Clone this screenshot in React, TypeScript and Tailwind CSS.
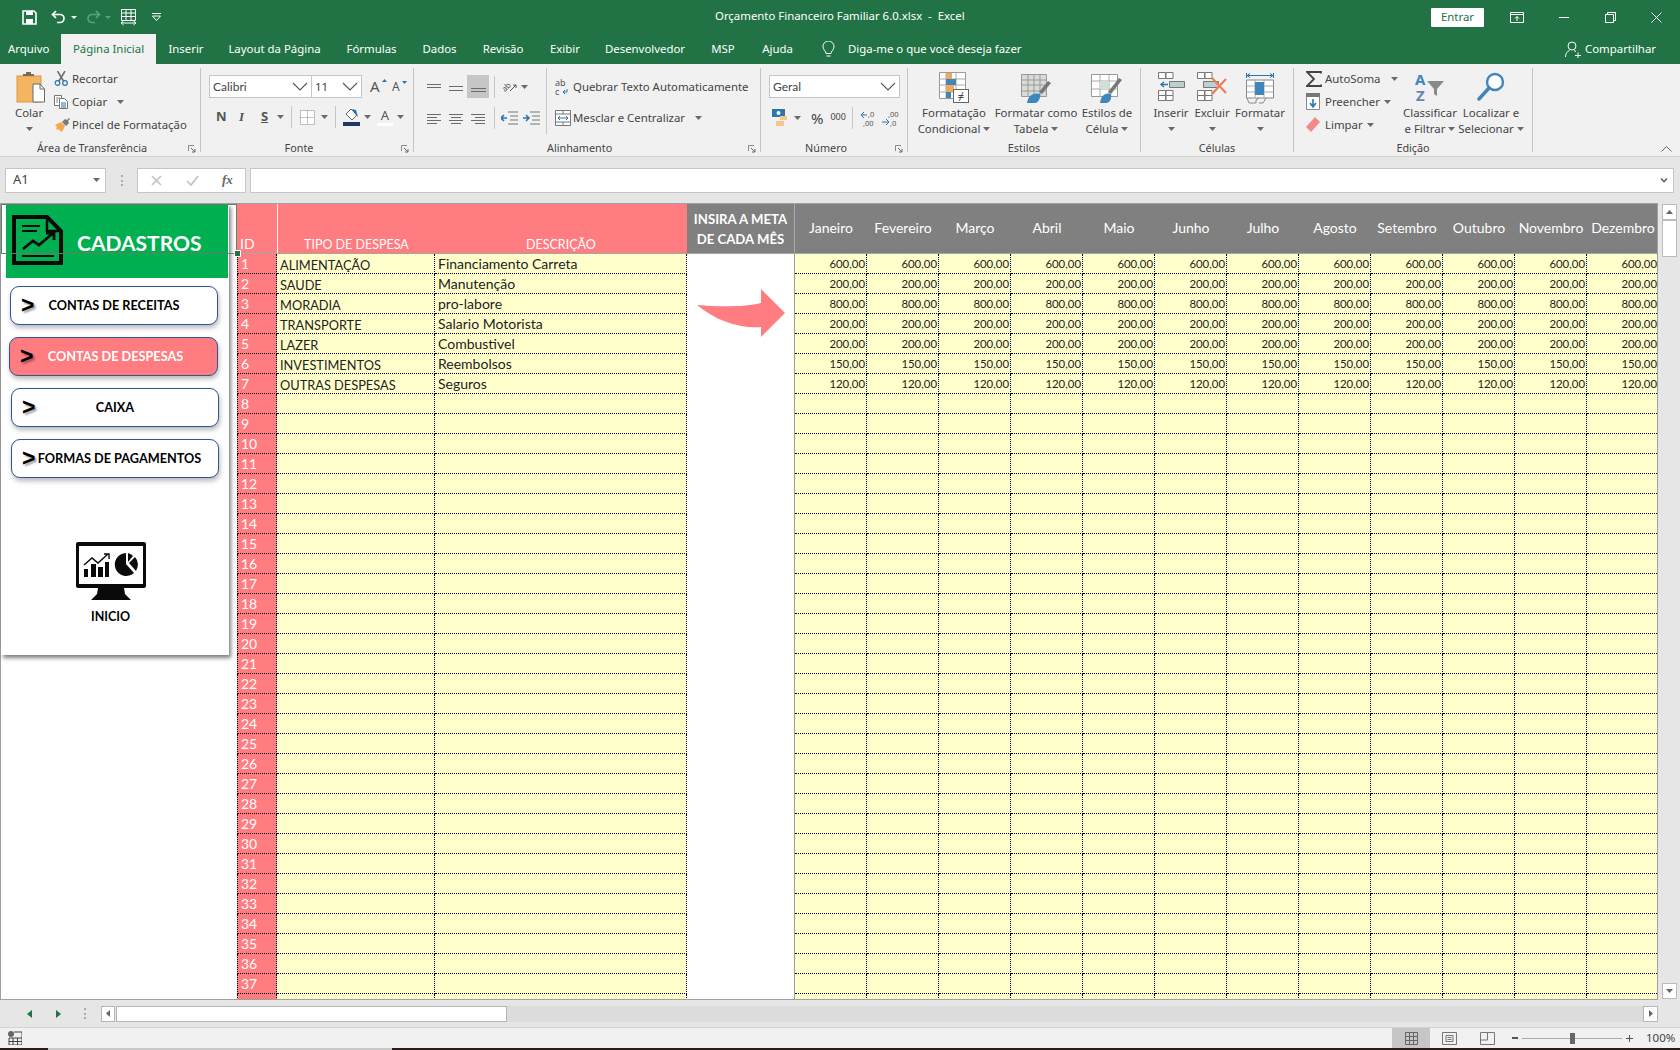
import React from "react";

const Caret = ({ className = "" }: { className?: string }) => (
  <svg width="7" height="4" viewBox="0 0 7 4" className={"inline-block shrink-0 " + className}>
    <path d="M0 0h7L3.5 4z" fill="#6a6a6a" />
  </svg>
);

const Chevron = () => (
  <svg width="16" height="9" viewBox="0 0 16 9" className="shrink-0">
    <path d="M1 1l7 7 7-7" fill="none" stroke="#555" strokeWidth="1.1" />
  </svg>
);

const Launcher = () => (
  <svg width="8" height="8" viewBox="0 0 8 8" className="absolute right-[4px] bottom-[3px]">
    <path d="M.5 6V.5H6" fill="none" stroke="#8a8a8a" />
    <path d="M3 3l4 4M7 4v3H4" fill="none" stroke="#6a6a6a" />
  </svg>
);

function Group({ w, label, launcher, children }: { w: string; label: string; launcher?: boolean; children: React.ReactNode }) {
  return (
    <div className={"flex shrink-0 h-[92px] " + w}>
      <div className="flex-1 flex flex-col min-w-0 relative">
        <div className="h-[76px] flex">{children}</div>
        <div className={"h-[16px] flex items-center justify-center leading-none text-[10.8px] text-[#444] " + (launcher ? "pr-[16px]" : "")}>{label}</div>
        {launcher && <Launcher />}
      </div>
      <div className="w-[1px] my-[4px] bg-[#c4c4c4]" />
    </div>
  );
}

function Big({ w, icon, lines, caret = true }: { w: string; icon: React.ReactNode; lines: string[]; caret?: boolean }) {
  return (
    <div className={"flex flex-col items-center shrink-0 " + w}>
      <div className="h-[41px] pt-[8px] flex justify-center">{icon}</div>
      {lines.map((l, i) => (
        <div key={l} className="h-[16px] leading-[16px] whitespace-nowrap text-center flex items-center justify-center gap-[3px]">
          {l}
          {i === lines.length - 1 && caret && lines.length > 1 && <Caret />}
        </div>
      ))}
      {lines.length === 1 && (
        <div className="h-[16px] flex items-center justify-center">
          <Caret />
        </div>
      )}
    </div>
  );
}

function Small({ icon, text, caret, slot = "w-[18px]" }: { icon: React.ReactNode; text: string; caret?: string; slot?: string }) {
  return (
    <div className="h-[23px] flex items-center whitespace-nowrap">
      <div className={"flex justify-start shrink-0 " + slot}>{icon}</div>
      <span>{text}</span>
      {caret && <Caret className={caret} />}
    </div>
  );
}

const Lines = ({ ys, xs }: { ys: number[]; xs: [number, number][] }) => (
  <svg width="15" height="15" viewBox="0 0 15 15" className="shrink-0">
    {ys.map((y, i) => (
      <path key={i} d={`M${xs[i][0]} ${y + 0.5}H${xs[i][1]}`} stroke="#6b6b6b" strokeWidth="1" />
    ))}
  </svg>
);

const IPaste = () => (
  <svg width="29" height="31" viewBox="0 0 29 31">
    <rect x="1" y="4" width="24" height="26" fill="#f3b562" stroke="#d99a3f" />
    <path d="M7 4V2h3V0h5v2h3v2z" fill="#7a6a58" />
    <path d="M17 12h7l4.500 5v13H17z" fill="#fff" stroke="#6a6a6a" />
    <path d="M24 12v5h4.500" fill="none" stroke="#6a6a6a" />
  </svg>
);
const IScissors = () => (
  <svg width="15" height="15" viewBox="0 0 15 15">
    <circle cx="3.500" cy="12" r="2.300" fill="none" stroke="#2e75a8" strokeWidth="1.200" />
    <circle cx="11" cy="12" r="2.300" fill="none" stroke="#2e75a8" strokeWidth="1.200" />
    <path d="M5 10L11 0M9.500 10L3.500 0" stroke="#6a6a6a" strokeWidth="1.500" />
  </svg>
);
const ICopy = () => (
  <svg width="15" height="14" viewBox="0 0 15 14">
    <path d="M.5.5h7v10h-7z" fill="#fff" stroke="#777" />
    <path d="M5.500 3.500h5l3 3v7h-8z" fill="#fff" stroke="#777" />
    <path d="M7 8h5M7 10h5M7 12h5" stroke="#2e75a8" />
    <path d="M2 3h4M2 5h2M2 7h2" stroke="#888" />
  </svg>
);
const IBrush = () => (
  <svg width="17" height="15" viewBox="0 0 17 15">
    <path d="M1 8l6-3 4 4-3 6-2-1-1-2-2 1-1-2 1-1z" fill="#f3a94f" />
    <path d="M8 5l3-3 2 1 2-2 1 1-2 2 1 2-3 3z" fill="#7a7a7a" />
  </svg>
);
const IBorders = () => (
  <svg width="15" height="15" viewBox="0 0 15 15">
    <path d="M.5.5h14v14H.5zM7.500.5v14M.5 7.500h14" fill="#fff" stroke="#888" strokeDasharray="1 1" />
  </svg>
);
const IFill = () => (
  <svg width="17" height="18" viewBox="0 0 17 18">
    <path d="M8 1l6 6-5 5-6-6z" fill="#fff" stroke="#666" />
    <path d="M9 1l4 1 2 7-3-3z" fill="#2e75a8" />
    <rect x="0" y="14" width="17" height="4" fill="#1f3864" />
  </svg>
);
const IOrient = () => (
  <svg width="17" height="17" viewBox="0 0 17 17" className="overflow-visible">
    <text x="0" y="11" fontSize="8" fill="#555" transform="rotate(-45 6 8)" fontFamily="Noto Sans">ab</text>
    <path d="M9 13l6-6M12 7h3v3" fill="none" stroke="#555" />
  </svg>
);
const IIndent = ({ dir }: { dir: "l" | "r" }) => (
  <svg width="17" height="14" viewBox="0 0 17 14">
    <path d="M7 1h10M9 5h8M9 9h8M7 13h10" stroke="#777" />
    <path d={dir === "l" ? "M0 7h6M3 4L0 7l3 3" : "M0 7h6M3 4l3 3-3 3"} fill="none" stroke="#2e75a8" strokeWidth="1.600" />
  </svg>
);
const IWrap = () => (
  <svg width="14" height="18" viewBox="0 0 14 18" className="overflow-visible">
    <text x="0" y="8" fontSize="9" fill="#555" fontFamily="Noto Sans">ab</text>
    <text x="0" y="17" fontSize="9" fill="#555" fontFamily="Noto Sans">c</text>
    <path d="M12 11v3H8M10 12l-2 2 2 2" fill="none" stroke="#2e75a8" />
  </svg>
);
const IMerge = () => (
  <svg width="16" height="16" viewBox="0 0 16 16">
    <path d="M.5.5h15v15H.5z" fill="#fff" stroke="#777" />
    <path d="M.5 4h15M.5 12h15M8 .5V4M8 12v3.500" stroke="#777" />
    <path d="M3 8h10M5 6L3 8l2 2M11 6l2 2-2 2" fill="none" stroke="#2e75a8" />
  </svg>
);
const IMoney = () => (
  <svg width="17" height="18" viewBox="0 0 17 18">
    <rect x="0" y="0" width="13" height="8" fill="#2e75a8" />
    <circle cx="6.500" cy="4" r="2" fill="#fff" />
    <rect x="8" y="7" width="7" height="4" fill="#f5c78c" />
    <rect x="4" y="12" width="8" height="5" fill="#f5c78c" />
  </svg>
);
const IDec = ({ flip }: { flip?: boolean }) => (
  <svg width="16" height="17" viewBox="0 0 16 17" className="overflow-visible">
    <text x={flip ? 6 : 8} y="7" fontSize="7.500" fill="#555" fontFamily="Noto Sans">{flip ? ",00" : ",0"}</text>
    <text x={flip ? 8 : 3} y="16" fontSize="7.500" fill="#555" fontFamily="Noto Sans">{flip ? ",0" : ",00"}</text>
    {flip ? <path d="M0 12h6M4 9l3 3-3 3" fill="none" stroke="#2e75a8" /> : <path d="M1 5h6M4 2L1 5l3 3" fill="none" stroke="#2e75a8" />}
  </svg>
);
const ICond = () => (
  <svg width="30" height="31" viewBox="0 0 30 31">
    <path d="M.5.5h26v26H.5z" fill="#fff" stroke="#999" />
    <path d="M7 .5v26M17 .5v26M.5 7h26M.5 13h26M.5 20h26" stroke="#aaa" />
    <rect x="7" y="1" width="6" height="6" fill="#f0a860" />
    <rect x="7" y="7" width="10" height="6" fill="#3e86bb" />
    <rect x="7" y="13" width="8" height="7" fill="#f0a860" />
    <rect x="7" y="20" width="5" height="6" fill="#3e86bb" />
    <rect x="14.500" y="17.500" width="15" height="13" fill="#fff" stroke="#666" />
    <text x="22" y="28" fontSize="11" textAnchor="middle" fill="#444" fontFamily="Noto Sans">≠</text>
  </svg>
);
const ITable = () => (
  <svg width="30" height="31" viewBox="0 0 30 31">
    <path d="M.5 2.500h25v22H.5z" fill="#d8dcd8" stroke="#999" />
    <path d="M.5 8h25M.5 13h25M.5 19h25M7 2.500v22M13 2.500v22M19 2.500v22" stroke="#999" />
    <path d="M18 20l9-11 3 2-9 11z" fill="#777" />
    <path d="M6 31c1-7 6-11 13-9 1 4-2 9-5 9z" fill="#3e86bb" />
  </svg>
);
const ICellStyle = () => (
  <svg width="32" height="31" viewBox="0 0 32 31">
    <path d="M.5 2.500h26v22H.5z" fill="#fff" stroke="#999" />
    <path d="M.5 9h26M.5 17h26M9 2.500v22M18 2.500v22" stroke="#aaa" />
    <rect x="9" y="9" width="9" height="8" fill="#cfe2d3" />
    <path d="M17 20L28 6l3 2-11 14z" fill="#777" />
    <path d="M9 31c1-7 5-11 11-9 1 4-1 9-5 9z" fill="#3e86bb" />
  </svg>
);
const IInsert = () => (
  <svg width="27" height="29" viewBox="0 0 27 29">
    <path d="M.5.5h7v6h-7zM8 .5h7v6H8zM.5 18.500h7v5h-7zM8 18.500h7v5H8zM.5 23.500h7v5h-7zM8 23.500h7v5H8z" fill="#fff" stroke="#777" />
    <path d="M11.500 9.500h15v6h-15z" fill="#bcd0d0" stroke="#777" />
    <path d="M3 12.500h7M6 10l-3 2.500 3 2.500" fill="none" stroke="#2e75a8" strokeWidth="1.400" />
  </svg>
);
const IDelete = () => (
  <svg width="30" height="29" viewBox="0 0 30 29">
    <path d="M.5.5h7v6h-7zM8 .5h7v6H8zM.5 18.500h7v5h-7zM8 18.500h7v5H8zM.5 23.500h7v5h-7zM8 23.500h7v5H8z" fill="#fff" stroke="#777" />
    <path d="M6.500 9.500h15v6h-15z" fill="#bcd0d0" stroke="#777" />
    <path d="M15 6l14 15M29 7L15 22" stroke="#ed7d5a" strokeWidth="2.200" />
  </svg>
);
const IFormat = () => (
  <svg width="28" height="32" viewBox="0 0 28 32">
    <path d="M.5 1v5M27.500 1v5M1 3.500h26M4 1.500L1 3.500l3 2M24 1.500l3 2-3 2" fill="none" stroke="#2e75a8" />
    <path d="M.5 8h27v18H.5z" fill="#fff" stroke="#888" />
    <path d="M.5 14h27M.5 20h27M9 8v18M18 8v18" stroke="#aaa" />
    <rect x="9" y="10" width="9" height="13" fill="#3e86bb" />
    <path d="M1 26l2 5h7v-3l3-2M13 31h4l3-5" fill="none" stroke="#888" />
  </svg>
);
const IFillDown = () => (
  <svg width="14" height="17" viewBox="0 0 14 17">
    <path d="M.5.5h13v16H.5z" fill="#fff" stroke="#888" />
    <rect x="0" y="0" width="14" height="4" fill="#777" />
    <path d="M7 6v8M4 10l3 4 3-4" fill="none" stroke="#2e75a8" strokeWidth="1.600" />
  </svg>
);
const IEraser = () => (
  <svg width="14" height="15" viewBox="0 0 14 15">
    <path d="M0 10l9-10 5 5-9 10z" fill="#f28a8c" />
  </svg>
);
const ISort = () => (
  <svg width="30" height="30" viewBox="0 0 30 30" className="overflow-visible">
    <text x="0" y="13" fontSize="15" fontWeight="700" fill="#3e86bb" fontFamily="Noto Sans">A</text>
    <text x="1" y="29" fontSize="15" fontWeight="700" fill="#6a82b0" fontFamily="Noto Sans">Z</text>
    <path d="M12 9h17l-7 8v7l-3-2v-5z" fill="#8a8a8a" />
  </svg>
);
const ISearch = () => (
  <svg width="28" height="29" viewBox="0 0 28 29">
    <circle cx="18" cy="10" r="8" fill="#fff" stroke="#3e86bb" strokeWidth="2.400" />
    <path d="M12 16L2 27" stroke="#3e86bb" strokeWidth="3.400" strokeLinecap="round" />
  </svg>
);
const IDoc = () => (
  <svg width="51" height="50" viewBox="0 0 51 50">
    <path d="M2 2h33l14 14v32H2z" fill="none" stroke="#0a0a0a" strokeWidth="4" />
    <path d="M35 3v13h13" fill="none" stroke="#0a0a0a" strokeWidth="2.500" />
    <path d="M10 11h18M10 16h15" stroke="#0a0a0a" strokeWidth="2" />
    <path d="M11 34l10-8 6 4 13-11M34 18h8v7" fill="none" stroke="#0a0a0a" strokeWidth="2.800" />
    <path d="M10 41h32" stroke="#0a0a0a" strokeWidth="2" />
  </svg>
);
const IMonitor = () => (
  <svg width="70" height="58" viewBox="0 0 70 58">
    <rect x="0" y="0" width="70" height="46" rx="2" fill="#0a0a0a" />
    <rect x="3" y="4" width="64" height="38" fill="#fff" />
    <path d="M22 46h26l1 6 6 6H15l6-6z" fill="#0a0a0a" />
    <rect x="8" y="27" width="4" height="8" fill="#0a0a0a" />
    <rect x="15" y="22" width="5" height="13" fill="#0a0a0a" />
    <rect x="22" y="25" width="5" height="10" fill="#0a0a0a" />
    <rect x="29" y="20" width="4" height="15" fill="#0a0a0a" />
    <path d="M8 23l8-7 6 5 10-9M28 12h5v5" fill="none" stroke="#0a0a0a" strokeWidth="1.400" />
    <path d="M50 11a11.500 11.500 0 1 0 8 20l-8-9z" fill="#0a0a0a" />
    <path d="M52 11a11 11 0 0 1 5 3l-5 6z" fill="#0a0a0a" />
    <path d="M59 15a11.500 11.500 0 0 1 1 14l-7-8z" fill="#0a0a0a" />
  </svg>
);

const months = ["Janeiro", "Fevereiro", "Março", "Abril", "Maio", "Junho", "Julho", "Agosto", "Setembro", "Outubro", "Novembro", "Dezembro"];
const values = ["600,00", "200,00", "800,00", "200,00", "200,00", "150,00", "120,00"];
const tipos = ["ALIMENTAÇÃO", "SAUDE", "MORADIA", "TRANSPORTE", "LAZER", "INVESTIMENTOS", "OUTRAS DESPESAS"];
const descs = ["Financiamento Carreta", "Manutenção", "pro-labore", "Salario Motorista", "Combustivel", "Reembolsos", "Seguros"];
const rows = Array.from({ length: 38 }, (_, i) => i);
const rowBorder = "h-[20px] shrink-0 border-b border-dotted border-black flex items-center leading-[16px]";

const tabs = [
  { t: "Arquivo", c: "w-[58px] pl-[8px]" },
  { t: "Página Inicial", c: "w-[95px] ml-[3px] justify-center bg-[#f1f1f1] text-[#217346]" },
  { t: "Inserir", c: "w-[60px] justify-center" },
  { t: "Layout da Página", c: "w-[117px] justify-center" },
  { t: "Fórmulas", c: "w-[77px] justify-center" },
  { t: "Dados", c: "w-[59px] justify-center" },
  { t: "Revisão", c: "w-[68px] justify-center" },
  { t: "Exibir", c: "w-[56px] justify-center" },
  { t: "Desenvolvedor", c: "w-[104px] justify-center" },
  { t: "MSP", c: "w-[52px] justify-center" },
  { t: "Ajuda", c: "w-[57px] justify-center" },
];

const SideButton = ({ label, c, textc = "text-black", pl = "" }: { label: string; c: string; textc?: string; pl?: string }) => (
  <div className={"relative h-[39px] mt-[12px] rounded-[9px] border-[1.5px] border-[#2f5597] flex items-center justify-center shadow-[1px_3px_5px_rgba(0,0,0,0.28)] font-bold text-[12.7px] " + c + " " + textc + " " + pl}>
    <span className="absolute left-[10px] top-[5px] text-[23px] leading-[26px] text-black font-bold font-['Liberation_Sans',sans-serif] [text-shadow:2px_2px_2px_rgba(0,0,0,0.35)]">&gt;</span>
    <span className="whitespace-nowrap">{label}</span>
  </div>
);

export default function App() {
  return (
    <div className="w-[1680px] h-[1050px] overflow-hidden flex flex-col bg-[#e6e6e6] text-[11.4px] text-[#444] font-['Noto_Sans',sans-serif]">
      {/* title bar */}
      <div className="h-[34px] shrink-0 bg-[#217346] flex items-center text-white relative">
        <div className="flex items-center pl-[22px]">
          <svg width="15" height="15" viewBox="0 0 15 15">
            <path d="M1 1h11l2 2v11H1z" fill="none" stroke="#fff" strokeWidth="1.600" />
            <path d="M4 1h7v4H4z" fill="#fff" />
            <path d="M4 9h7v5H4z" fill="#fff" />
          </svg>
          <svg width="15" height="14" viewBox="0 0 15 14" className="ml-[14px]">
            <path d="M5 1L1.500 4.500 5 8M2 4.500h7a4 4 0 0 1 0 8H6" fill="none" stroke="#fff" strokeWidth="1.700" />
          </svg>
          <svg width="6" height="3" viewBox="0 0 6 3" className="ml-[5px]"><path d="M0 0h6L3 3z" fill="#fff" /></svg>
          <svg width="15" height="14" viewBox="0 0 15 14" className="ml-[9px]">
            <path d="M10 1l3.500 3.500L10 8M13 4.500H6a4 4 0 0 0 0 8h3" fill="none" stroke="#5f9f80" strokeWidth="1.700" />
          </svg>
          <svg width="6" height="3" viewBox="0 0 6 3" className="ml-[4px]"><path d="M0 0h6L3 3z" fill="#5f9f80" /></svg>
          <svg width="17" height="17" viewBox="0 0 17 17" className="ml-[9px]">
            <path d="M1.500.5h14v11h-14zM1.500 4h14M1.500 7.500h14M6 .5v11M11 .5v11" fill="none" stroke="#fff" />
            <path d="M1 14h15M3.500 12L1 14l2.500 2M13.500 12l2.500 2-2.500 2" fill="none" stroke="#fff" />
          </svg>
          <svg width="9" height="8" viewBox="0 0 9 8" className="ml-[15px]">
            <path d="M0 .5h9" stroke="#fff" />
            <path d="M.5 3h8L4.500 7.500z" fill="none" stroke="#fff" />
          </svg>
        </div>
        <div className="absolute left-[715px] top-[6px] text-[11.4px] leading-[20px] whitespace-nowrap">Orçamento Financeiro Familiar 6.0.xlsx&nbsp; -&nbsp; Excel</div>
        <div className="ml-auto flex items-center">
          <div className="w-[53px] h-[19px] mr-[26px] bg-white rounded-[1px] text-[#217346] flex items-center justify-center">Entrar</div>
          <svg width="14" height="11" viewBox="0 0 14 11">
            <path d="M.5.5h13v10H.5zM.5 2.500h13" fill="none" stroke="#fff" />
            <path d="M7 9V4.500M5 6.500l2-2 2 2" fill="none" stroke="#fff" />
          </svg>
          <div className="w-[10px] h-[1px] bg-white ml-[35px]" />
          <svg width="11" height="11" viewBox="0 0 11 11" className="ml-[36px]">
            <path d="M.5 2.500h8v8h-8zM2.500 2.500v-2h8v8h-2" fill="none" stroke="#fff" />
          </svg>
          <svg width="11" height="11" viewBox="0 0 11 11" className="ml-[35px] mr-[18px]">
            <path d="M.5.5l10 10M10.500.5l-10 10" stroke="#fff" />
          </svg>
        </div>
      </div>

      {/* tabs */}
      <div className="h-[30px] shrink-0 bg-[#217346] flex text-white text-[11.4px]">
        {tabs.map((t) => (
          <div key={t.t} className={"h-full flex items-center whitespace-nowrap " + t.c}>{t.t}</div>
        ))}
        <div className="flex items-center ml-[16px] gap-[13px]">
          <svg width="13" height="17" viewBox="0 0 13 17">
            <path d="M4 12.500C4 10 1 9 1 5.500a5.500 5.500 0 0 1 11 0C12 9 9 10 9 12.500zM4.500 15h4" fill="none" stroke="#fff" />
          </svg>
          <span className="whitespace-nowrap">Diga-me o que você deseja fazer</span>
        </div>
        <div className="ml-auto flex items-center pr-[24px] gap-[4px]">
          <svg width="16" height="17" viewBox="0 0 16 17">
            <circle cx="7" cy="5" r="4" fill="none" stroke="#fff" />
            <path d="M.5 16c0-4 2-6 4-6.500M9 9.500l2 1M10 14.500h6M13 11.500v6" fill="none" stroke="#fff" />
          </svg>
          <span>Compartilhar</span>
        </div>
      </div>

      {/* ribbon */}
      <div className="h-[92px] shrink-0 bg-[#f1f1f1] flex relative">
        <Group w="w-[201px]" label="Área de Transferência" launcher>
          <div className="w-[54px] shrink-0 flex flex-col">
            <div className="w-[54px] h-[41px] pt-[8px] pl-[16px]"><IPaste /></div>
            <div className="h-[16px] leading-[16px] pl-[15px]">Colar</div>
            <div className="h-[16px] flex items-center pl-[26px]"><Caret /></div>
          </div>
          <div className="pt-[3px] flex flex-col">
            <Small icon={<IScissors />} text="Recortar" />
            <Small icon={<ICopy />} text="Copiar" caret="ml-[10px]" />
            <Small icon={<IBrush />} text="Pincel de Formatação" />
          </div>
        </Group>

        <Group w="w-[213px]" label="Fonte" launcher>
          <div className="pl-[8px] pt-[11px] flex flex-col">
            <div className="flex items-center h-[23px]">
              <div className="w-[103px] h-[23px] bg-white border border-[#c6c6c6] flex items-center justify-between pl-[3px] pr-[3px]">
                <span className="font-['Lato',sans-serif] text-[12px]">Calibri</span><Chevron />
              </div>
              <div className="w-[50px] h-[23px] bg-white border border-l-0 border-[#c6c6c6] flex items-center justify-between pl-[3px] pr-[3px]">
                <span>11</span><Chevron />
              </div>
              <div className="relative ml-[8px] w-[14px] text-[15px] leading-none text-[#555]">A<svg width="5" height="3" className="absolute right-[-3px] top-0"><path d="M0 3h5L2.500 0z" fill="#2e75a8" /></svg></div>
              <div className="relative ml-[8px] w-[12px] text-[12px] leading-none text-[#555]">A<svg width="5" height="3" className="absolute right-[-3px] top-0"><path d="M0 0h5L2.500 3z" fill="#2e75a8" /></svg></div>
            </div>
            <div className="flex items-center h-[24px] mt-[7px] text-[13px] text-[#555]">
              <span className="ml-[7px] w-[23px] font-bold">N</span>
              <span className="w-[22px] italic font-['Liberation_Serif',serif] font-bold">I</span>
              <span className="w-[16px] underline font-bold">S</span>
              <Caret className="ml-[0px]" />
              <div className="w-px h-[22px] bg-[#c6c6c6] ml-[7px]" />
              <div className="ml-[8px]"><IBorders /></div>
              <Caret className="ml-[6px]" />
              <div className="w-px h-[22px] bg-[#c6c6c6] ml-[7px]" />
              <div className="ml-[7px]"><IFill /></div>
              <Caret className="ml-[4px]" />
              <div className="ml-[6px] w-[16px] text-center leading-[15px] border-b-[3px] border-white">A</div>
              <Caret className="ml-[4px]" />
            </div>
          </div>
        </Group>

        <Group w="w-[347px]" label="" launcher>
          <div className="w-[132px] pl-[13px] pt-[11px] flex flex-col shrink-0">
            <div className="flex items-center h-[23px]">
              <Lines ys={[5, 8]} xs={[[0, 14], [0, 14]]} />
              <div className="ml-[7px]"><Lines ys={[7, 11]} xs={[[0, 14], [0, 14]]} /></div>
              <div className="ml-[3px] w-[22px] h-[23px] bg-[#c6c6c6] flex items-center justify-center"><Lines ys={[9, 12]} xs={[[0, 15], [0, 15]]} /></div>
              <div className="w-px h-[22px] bg-[#c6c6c6] ml-[5px]" />
              <div className="ml-[6px]"><IOrient /></div>
              <Caret className="ml-[3px]" />
            </div>
            <div className="flex items-center h-[24px] mt-[8px]">
              <Lines ys={[3, 6, 9, 12]} xs={[[0, 14], [0, 10], [0, 14], [0, 10]]} />
              <div className="ml-[7px]"><Lines ys={[3, 6, 9, 12]} xs={[[0, 14], [2, 12], [0, 14], [2, 12]]} /></div>
              <div className="ml-[7px]"><Lines ys={[3, 6, 9, 12]} xs={[[0, 14], [4, 14], [0, 14], [4, 14]]} /></div>
              <div className="w-px h-[22px] bg-[#c6c6c6] ml-[8px]" />
              <div className="ml-[6px]"><IIndent dir="l" /></div>
              <div className="ml-[5px]"><IIndent dir="r" /></div>
            </div>
          </div>
          <div className="w-px h-[66px] mt-[4px] bg-[#c6c6c6] shrink-0" />
          <div className="pl-[8px] pt-[11px] flex flex-col relative">
            <Small icon={<IWrap />} text="Quebrar Texto Automaticamente" />
            <div className="mt-[8px]"><Small icon={<IMerge />} text="Mesclar e Centralizar" caret="ml-[10px]" /></div>
            <div className="absolute left-0 top-[77px] h-[14px] flex items-center whitespace-nowrap text-[10.8px]">Alinhamento</div>
          </div>
        </Group>

        <Group w="w-[147px]" label="Número" launcher>
          <div className="pl-[8px] pt-[11px] flex flex-col">
            <div className="w-[131px] h-[23px] bg-white border border-[#c6c6c6] flex items-center justify-between pl-[3px] pr-[3px]">
              <span className="font-['Lato',sans-serif] text-[12px]">Geral</span><Chevron />
            </div>
            <div className="flex items-center h-[24px] mt-[8px]">
              <div className="ml-[3px]"><IMoney /></div>
              <Caret className="ml-[5px]" />
              <span className="ml-[10px] text-[15px] leading-none">%</span>
              <span className="ml-[7px] text-[9px] leading-none pb-[3px]">000</span>
              <div className="w-px h-[22px] bg-[#c6c6c6] ml-[6px]" />
              <div className="ml-[7px]"><IDec /></div>
              <div className="ml-[6px]"><IDec flip /></div>
            </div>
          </div>
        </Group>

        <Group w="w-[233px]" label="Estilos">
          <div className="pl-[6px] flex">
            <Big w="w-[80px]" icon={<ICond />} lines={["Formatação", "Condicional"]} />
            <Big w="w-[84px]" icon={<ITable />} lines={["Formatar como", "Tabela"]} />
            <Big w="w-[58px]" icon={<ICellStyle />} lines={["Estilos de", "Célula"]} />
          </div>
        </Group>

        <Group w="w-[153px]" label="Células">
          <div className="pl-[9px] flex">
            <Big w="w-[42px]" icon={<IInsert />} lines={["Inserir"]} />
            <Big w="w-[40px]" icon={<IDelete />} lines={["Excluir"]} />
            <Big w="w-[56px]" icon={<IFormat />} lines={["Formatar"]} />
          </div>
        </Group>

        <Group w="w-[239px]" label="Edição">
          <div className="pl-[12px] flex">
            <div className="w-[95px] pt-[3px] flex flex-col shrink-0">
              <Small slot="w-[19px]" icon={<svg width="16" height="16" viewBox="0 0 16 16"><path d="M15 2.500V1H1l7 7-7 7h14v-1.500" fill="none" stroke="#444" strokeWidth="1.800" /></svg>} text="AutoSoma" caret="ml-[10px]" />
              <Small slot="w-[19px]" icon={<IFillDown />} text="Preencher" caret="ml-[4px]" />
              <Small slot="w-[19px]" icon={<IEraser />} text="Limpar" caret="ml-[4px]" />
            </div>
            <Big w="w-[58px]" icon={<ISort />} lines={["Classificar", "e Filtrar"]} />
            <Big w="w-[64px]" icon={<ISearch />} lines={["Localizar e", "Selecionar"]} />
          </div>
        </Group>
        <svg width="11" height="6" viewBox="0 0 11 6" className="absolute left-[1661px] bottom-[4px]">
          <path d="M.5 5.500l5-5 5 5" fill="none" stroke="#666" />
        </svg>
      </div>

      {/* formula bar */}
      <div className="h-[47px] shrink-0 bg-[#e6e6e6] border-t border-[#d0d0d0] flex items-center pl-[5px]">
        <div className="w-[101px] h-[25px] bg-white border border-[#c6c6c6] flex items-center justify-between pl-[7px] pr-[5px] text-[13px]">
          <span>A1</span><Caret />
        </div>
        <div className="w-[3px] h-[11px] ml-[15px] border-l-[2px] border-dotted border-[#aaa]" />
        <div className="w-[109px] h-[25px] ml-[13px] bg-white border border-[#c6c6c6] flex items-center pl-[13px]">
          <svg width="11" height="11" viewBox="0 0 11 11"><path d="M1 1l9 9M10 1l-9 9" stroke="#c2c2c2" strokeWidth="1.700" /></svg>
          <svg width="13" height="11" viewBox="0 0 13 11" className="ml-[24px]"><path d="M1 6l4 4 7-9" fill="none" stroke="#c2c2c2" strokeWidth="1.700" /></svg>
          <span className="ml-[23px] italic font-['Liberation_Serif',serif] font-bold text-[13px] text-[#666]">fx</span>
        </div>
        <div className="w-[1424px] h-[25px] ml-[4px] bg-white border border-[#c6c6c6] flex items-center justify-end pr-[5px]">
          <svg width="8" height="5" viewBox="0 0 8 5"><path d="M1 .5l3 3 3-3" fill="none" stroke="#666" strokeWidth="1.600" /></svg>
        </div>
      </div>

      {/* sheet */}
      <div className="h-[797px] shrink-0 flex">
        <div className="w-[1658px] shrink-0 h-full border-y border-r border-[#a0a0a0] bg-white flex overflow-hidden relative font-['Lato',sans-serif] text-[#222]">
          {/* floating panel column */}
          <div className="w-[237px] shrink-0 border-l border-[#a0a0a0] bg-white">
            <div className="w-[228px] h-[451px] bg-white flex flex-col shadow-[2px_3px_4px_rgba(0,0,0,0.5)]">
              <div className="h-[74px] w-[222px] ml-[5px] shrink-0 bg-[#00b050] flex">
                <div className="ml-[6px] mt-[11px]"><IDoc /></div>
                <div className="ml-[14px] mt-[25px] text-[21px] leading-[28px] font-bold text-white whitespace-nowrap">CADASTROS</div>
              </div>
              <SideButton label="CONTAS DE RECEITAS" c="ml-[9px] w-[208px] !mt-[8px] bg-white" />
              <SideButton label="CONTAS DE DESPESAS" c="ml-[8px] w-[209px] bg-[#ff7c80]" textc="text-white" pl="pl-[4px]" />
              <SideButton label="CAIXA" c="ml-[10px] w-[208px] bg-white" />
              <SideButton label="FORMAS DE PAGAMENTOS" c="ml-[10px] w-[208px] bg-white" pl="pl-[9px]" />
              <div className="mt-[64px] ml-[75px]"><IMonitor /></div>
              <div className="mt-[7px] ml-[90px] text-[12.5px] leading-[20px] font-bold text-black">INICIO</div>
            </div>
          </div>

          {/* table */}
          <div className="flex-1 flex flex-col min-w-0">
            <div className="h-[50px] shrink-0 flex border-b border-[#a6a6a6]">
              <div className="w-[40px] shrink-0 bg-[#ff7c80] text-white text-[14px] leading-[18px] pl-[3px] flex items-end">ID</div>
              <div className="w-px shrink-0 bg-white" />
              <div className="w-[409px] shrink-0 bg-[#ff7c80] text-white text-[12.5px] leading-[16px] flex items-end">
                <span className="ml-[26px] w-[222px] whitespace-nowrap">TIPO DE DESPESA</span>
                <span className="whitespace-nowrap">DESCRIÇÃO</span>
              </div>
              <div className="w-[108px] shrink-0 bg-[#808080] text-white font-bold text-[13.2px] leading-[20px] flex items-center justify-center text-center border-r border-[#a8a8a8]">
                INSIRA A META<br />DE CADA MÊS
              </div>
              <div className="flex-1 min-w-0 bg-[#808080] flex overflow-hidden text-[14px] text-white">
                {months.map((m) => (
                  <div key={m} className="w-[72px] shrink-0 text-center leading-[48px] whitespace-nowrap">{m}</div>
                ))}
              </div>
            </div>
            <div className="flex-1 flex min-h-0">
              <div className="w-[450px] shrink-0 text-[14px]">
                {rows.map((i) => (
                  <div key={i} className="flex">
                    <div className={rowBorder + " w-[40px] bg-[#ff7c80] text-white pl-[3px] border-x"}>{i + 1}</div>
                    <div className={rowBorder + " w-[158px] bg-[#ffffcc] pl-[3px] pt-[2px] border-r whitespace-nowrap text-[12.8px]"}>{tipos[i] ?? ""}</div>
                    <div className={rowBorder + " w-[252px] bg-[#ffffcc] pl-[3px] pt-[1px] border-r whitespace-nowrap"}>{descs[i] ?? ""}</div>
                  </div>
                ))}
              </div>
              <div className="w-[108px] shrink-0 bg-white border-r border-[#a0a0a0]">
                <svg width="90" height="50" viewBox="0 0 90 50" className="mt-[35px] ml-[9px]">
                  <path d="M1 16C25 18 50 18 65 14V0L89 24 65 48V38C45 40 20 32 1 16z" fill="#ff7c80" />
                </svg>
              </div>
              <div className="flex-1 min-w-0 overflow-hidden text-[11.4px]">
                {rows.map((i) => (
                  <div key={i} className="flex">
                    {months.map((m) => (
                      <div key={m} className={rowBorder + " w-[72px] bg-[#ffffcc] justify-end pr-[1px] pt-[1px] border-r"}>{values[i] ?? ""}</div>
                    ))}
                  </div>
                ))}
              </div>
            </div>
          </div>

          {/* cell selection */}
          <div className="absolute left-[1px] top-0 w-[236px] h-[50px] border border-[#5f7f6c]" />
          <div className="absolute left-[234px] top-[46px] w-[7px] h-[7px] bg-[#217346] border border-white" />
        </div>

        {/* vertical scrollbar */}
        <div className="flex-1 flex flex-col items-center pl-[4px] pr-[3px] pt-[1px] pb-[1px]">
          <div className="w-[15px] h-[16px] bg-white border border-[#bbb] flex items-center justify-center">
            <svg width="7" height="4"><path d="M0 4h7L3.500 0z" fill="#666" /></svg>
          </div>
          <div className="w-[15px] h-[37px] bg-white border border-[#bbb]" />
          <div className="flex-1" />
          <div className="w-[15px] h-[16px] bg-white border border-[#bbb] flex items-center justify-center">
            <svg width="7" height="4"><path d="M0 0h7L3.500 4z" fill="#666" /></svg>
          </div>
        </div>
      </div>

      {/* sheet tabs / h-scroll */}
      <div className="h-[27px] shrink-0 bg-[#e6e6e6] flex items-center">
        <svg width="5" height="8" className="ml-[27px]"><path d="M5 0v8L0 4z" fill="#217346" /></svg>
        <svg width="5" height="8" className="ml-[24px]"><path d="M0 0v8l5-4z" fill="#217346" /></svg>
        <div className="w-[3px] h-[11px] ml-[23px] border-l-[2px] border-dotted border-[#aaa]" />
        <div className="w-[14px] h-[16px] ml-[14px] bg-white border border-[#b5b5b5] flex items-center justify-center">
          <svg width="4" height="7"><path d="M4 0v7L0 3.500z" fill="#666" /></svg>
        </div>
        <div className="w-[391px] h-[16px] ml-[1px] bg-white border border-[#b5b5b5]" />
        <div className="w-[1136px] h-[16px] bg-[#dcdcdc]" />
        <div className="w-[15px] h-[16px] bg-white border border-[#b5b5b5] flex items-center justify-center">
          <svg width="4" height="7"><path d="M0 0v7l4-3.500z" fill="#666" /></svg>
        </div>
      </div>

      {/* status bar */}
      <div className="h-[21px] shrink-0 bg-[#f1f1f1] border-t border-[#d4d4d4] flex items-center relative text-[11.5px]">
        <svg width="14" height="14" viewBox="0 0 14 14" className="ml-[8px]">
          <circle cx="3" cy="3" r="3" fill="#666" />
          <path d="M6 1h8v13H1V7h13M1 10.500h13M5 7v7M9.500 7v7" fill="none" stroke="#444" />
        </svg>
        <div className="ml-auto flex items-center h-full">
          <div className="w-[38px] h-full bg-[#c6c6c6] flex items-center justify-center">
            <svg width="13" height="13" viewBox="0 0 13 13"><path d="M.5.5h12v12H.5zM.5 4.500h12M.5 8.500h12M4.500.5v12M8.500.5v12" fill="none" stroke="#666" /></svg>
          </div>
          <svg width="15" height="13" viewBox="0 0 15 13" className="ml-[12px]"><path d="M.5.5h14v12H.5z" fill="none" stroke="#777" /><path d="M4 3.500h7v6H4zM5.500 5.500h4M5.500 7.500h4" fill="none" stroke="#777" /></svg>
          <svg width="15" height="13" viewBox="0 0 15 13" className="ml-[23px]"><path d="M.5 12.500V.5h14v12M.5 8h7V.5" fill="none" stroke="#777" /><path d="M.5 12.500h14" stroke="#777" /></svg>
          <div className="w-[6px] h-[2px] bg-[#555] ml-[17px]" />
          <div className="w-[100px] h-[1px] bg-[#aaa] ml-[4px] relative">
            <div className="absolute left-[48px] top-[-5px] w-[5px] h-[11px] bg-[#666]" />
          </div>
          <svg width="7" height="7" viewBox="0 0 7 7" className="ml-[4px]"><path d="M0 3.500h7M3.500 0v7" stroke="#555" /></svg>
          <span className="ml-[13px] w-[34px]">100%</span>
        </div>
      </div>

      {/* bottom strip */}
      <div className="h-[2px] shrink-0 bg-[#2a1b1b] flex">
        <div className="ml-[48px] w-[344px] bg-[#c8c8c8]" />
      </div>
    </div>
  );
}
